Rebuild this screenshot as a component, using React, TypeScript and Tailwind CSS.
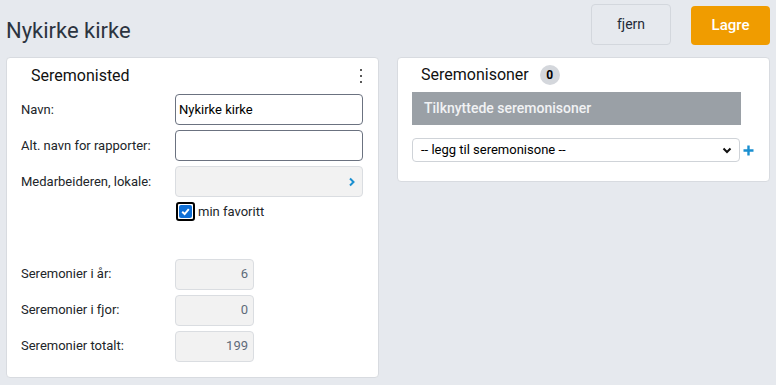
import React from "react";

function Row({ label, children }: { label: string; children: React.ReactNode }) {
  return (
    <div className="flex items-center">
      <div className="w-[154px] shrink-0 text-[13px] text-[#212529]">{label}</div>
      {children}
    </div>
  );
}

function StatBox({ value }: { value: string }) {
  return (
    <div className="flex h-[31px] w-[79px] items-center justify-end rounded-[4px] border border-[#dadde1] bg-[#f2f2f2] pr-[5px] text-[13px] text-[#5f6b7a]">
      {value}
    </div>
  );
}

export default function App() {
  return (
    <div
      className="h-[385px] w-full bg-[#e6e9ee] px-[6px]"
      style={{ fontFamily: "Roboto, 'Liberation Sans', sans-serif" }}
    >
      <div className="flex h-[57px] items-start justify-between pb-[12px]">
        <h1 className="mt-[17px] text-[22px] leading-[28px] text-[#2c3440]">Nykirke kirke</h1>
        <div className="flex items-end gap-[20px] pt-[4px]">
          <button className="h-[41px] w-[80px] rounded-[4px] border border-[#d3d7dd] bg-[#e6e9ee] text-[14px] text-[#1f2a38]">
            fjern
          </button>
          <button className="h-[39px] w-[79px] rounded-[4px] bg-[#f09c00] text-[15px] font-medium text-white">
            Lagre
          </button>
        </div>
      </div>

      <div className="flex items-start gap-[18px]">
        {/* left card */}
        <div className="h-[321px] w-[373px] rounded-[4px] border border-[#d8dbe0] bg-white px-[14px]">
          <div className="flex h-[36px] items-center justify-between pl-[10px]">
            <span className="text-[16px] text-[#111]">Seremonisted</span>
            <span className="mr-[2px] flex flex-col items-center gap-[3.5px]">
              <span className="block h-[2.5px] w-[2.5px] rounded-full bg-[#222]" />
              <span className="block h-[2.5px] w-[2.5px] rounded-full bg-[#222]" />
              <span className="block h-[2.5px] w-[2.5px] rounded-full bg-[#222]" />
            </span>
          </div>

          <div className="flex flex-col gap-[5px]">
            <Row label="Navn:">
              <div className="flex h-[31px] w-[188px] items-center rounded-[4px] border border-[#6b7280] pl-[3px] text-[13px] text-black">
                Nykirke kirke
              </div>
            </Row>
            <Row label="Alt. navn for rapporter:">
              <div className="h-[31px] w-[188px] rounded-[4px] border border-[#6b7280]" />
            </Row>
            <Row label="Medarbeideren, lokale:">
              <div className="flex h-[31px] w-[188px] items-center justify-end rounded-[4px] border border-[#dadde1] bg-[#f2f2f2] pr-[6px]">
                <svg width="8" height="10" viewBox="0 0 8 10">
                  <path d="M2 1.5 L5.5 5 L2 8.5" fill="none" stroke="#1a8fd0" strokeWidth="2" />
                </svg>
              </div>
            </Row>
            <div className="flex items-center pl-[155px]">
              <span className="flex h-[19px] w-[19px] items-center justify-center rounded-[3px] border-2 border-black bg-white">
                <span className="flex h-[13px] w-[13px] items-center justify-center rounded-[2px] bg-[#0f6fd6]">
                  <svg width="11" height="11" viewBox="0 0 10 10">
                    <path d="M2 5.2 L4.2 7.3 L8 2.8" fill="none" stroke="white" strokeWidth="1.8" />
                  </svg>
                </span>
              </span>
              <span className="ml-[3px] text-[13px] text-[#212529]">min favoritt</span>
            </div>
          </div>

          <div className="mt-[37px] flex flex-col gap-[5px]">
            <Row label="Seremonier i år:">
              <StatBox value="6" />
            </Row>
            <Row label="Seremonier i fjor:">
              <StatBox value="0" />
            </Row>
            <Row label="Seremonier totalt:">
              <StatBox value="199" />
            </Row>
          </div>
        </div>

        {/* right card */}
        <div className="h-[125px] w-[373px] rounded-[4px] border border-[#d8dbe0] bg-white pl-[14px]">
          <div className="flex h-[34px] items-center pl-[9px]">
            <span className="text-[16px] text-[#111]">Seremonisoner</span>
            <span className="ml-[11px] flex h-[20px] w-[20px] items-center justify-center rounded-full bg-[#d4d7dc] text-[12px] font-bold text-black">
              0
            </span>
          </div>
          <div className="flex h-[33px] w-[329px] items-center bg-[#9aa0a6] pl-[12px] text-[14px] font-medium text-[#f1f2f4]">
            Tilknyttede seremonisoner
          </div>
          <div className="mt-[13px] flex items-center">
            <div className="flex h-[24px] w-[328px] items-center justify-between rounded-[4px] border border-[#cfd3d8] pl-[8px] pr-[7px] text-[13px] text-black">
              <span>-- legg til seremonisone --</span>
              <svg width="10" height="7" viewBox="0 0 10 7">
                <path d="M1.5 1.5 L5 5 L8.5 1.5" fill="none" stroke="#111" strokeWidth="2" />
              </svg>
            </div>
            <svg className="ml-[3px]" width="11" height="11" viewBox="0 0 11 11">
              <path d="M5.5 0.5 V10.5 M0.5 5.5 H10.5" stroke="#1a8fd0" strokeWidth="2.4" />
            </svg>
          </div>
        </div>
      </div>
    </div>
  );
}
